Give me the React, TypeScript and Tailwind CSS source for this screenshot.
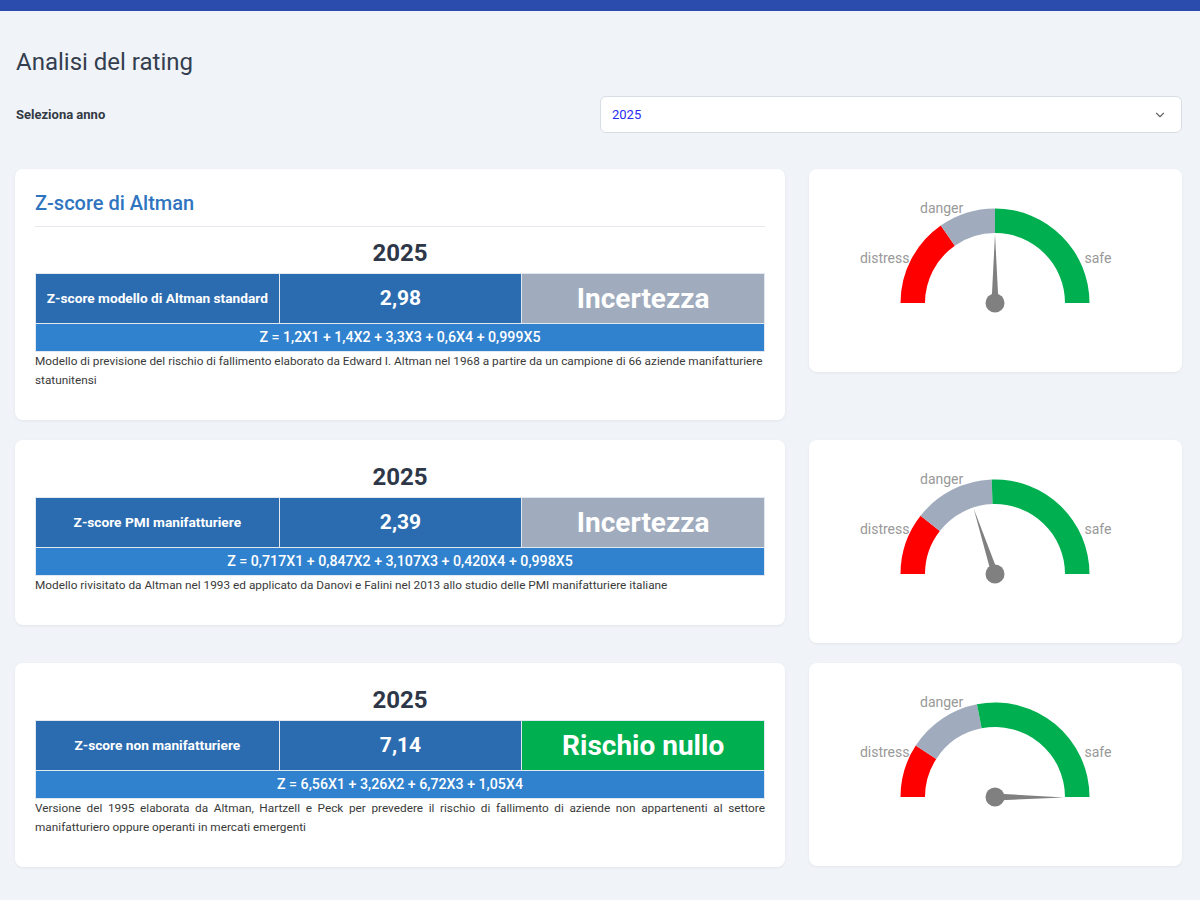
import React from "react";
import { ChevronDown } from "lucide-react";

type Model = {
  year: string;
  label: string;
  value: string;
  status: string;
  statusClass: string;
  formula: string;
  desc: string;
  justify?: boolean;
  title?: string;
};

const models: Model[] = [
  {
    title: "Z-score di Altman",
    year: "2025",
    label: "Z-score modello di Altman standard",
    value: "2,98",
    status: "Incertezza",
    statusClass: "bg-[#a0acbd]",
    formula: "Z = 1,2X1 + 1,4X2 + 3,3X3 + 0,6X4 + 0,999X5",
    desc: "Modello di previsione del rischio di fallimento elaborato da Edward I. Altman nel 1968 a partire da un campione di 66 aziende manifatturiere statunitensi",
  },
  {
    year: "2025",
    label: "Z-score PMI manifatturiere",
    value: "2,39",
    status: "Incertezza",
    statusClass: "bg-[#a0acbd]",
    formula: "Z = 0,717X1 + 0,847X2 + 3,107X3 + 0,420X4 + 0,998X5",
    desc: "Modello rivisitato da Altman nel 1993 ed applicato da Danovi e Falini nel 2013 allo studio delle PMI manifatturiere italiane",
  },
  {
    year: "2025",
    label: "Z-score non manifatturiere",
    value: "7,14",
    status: "Rischio nullo",
    statusClass: "bg-[#00b050]",
    formula: "Z = 6,56X1 + 3,26X2 + 6,72X3 + 1,05X4",
    desc: "Versione del 1995 elaborata da Altman, Hartzell e Peck per prevedere il rischio di fallimento di aziende non appartenenti al settore manifatturiero oppure operanti in mercati emergenti",
    justify: true,
  },
];

const gauges = [
  { red: 125, gray: 90, needle: 90 },
  { red: 142, gray: 92, needle: 108 },
  { red: 147, gray: 101, needle: -0.5 },
];

const CX = 186;
const CY = 134;
const RO = 94.5;
const RI = 70;

function pt(r: number, deg: number) {
  const a = (deg * Math.PI) / 180;
  return [CX + r * Math.cos(a), CY - r * Math.sin(a)];
}

function arc(from: number, to: number) {
  const [x1, y1] = pt(RO, from);
  const [x2, y2] = pt(RO, to);
  const [x3, y3] = pt(RI, to);
  const [x4, y4] = pt(RI, from);
  const large = from - to > 180 ? 1 : 0;
  return `M${x1} ${y1} A${RO} ${RO} 0 ${large} 1 ${x2} ${y2} L${x3} ${y3} A${RI} ${RI} 0 ${large} 0 ${x4} ${y4} Z`;
}

function Gauge({ red, gray, needle }: { red: number; gray: number; needle: number }) {
  const [tx, ty] = pt(69, needle);
  const [bx1, by1] = pt(3.5, needle + 90);
  const [bx2, by2] = pt(3.5, needle - 90);
  return (
    <svg width="373" height="203" viewBox="0 0 373 203" className="block">
      <path d={arc(180, red)} fill="#ff0000" />
      <path d={arc(red, gray)} fill="#a0acbd" />
      <path d={arc(gray, 0)} fill="#00b050" />
      <polygon points={`${bx1},${by1} ${tx},${ty} ${bx2},${by2}`} fill="#808080" />
      <circle cx={CX} cy={CY} r="9.5" fill="#808080" />
      <text x="100.5" y="94" textAnchor="end" fontSize="14" fill="#999999" fontFamily="Roboto, sans-serif">
        distress
      </text>
      <text x="111" y="44" fontSize="14" fill="#999999" fontFamily="Roboto, sans-serif">
        danger
      </text>
      <text x="275.5" y="94" fontSize="14" fill="#999999" fontFamily="Roboto, sans-serif">
        safe
      </text>
    </svg>
  );
}

function ModelCard({ m }: { m: Model }) {
  return (
    <div className={`bg-white rounded-lg shadow-[0_1px_3px_rgba(0,0,0,0.06)] px-5 pb-[30px] ${m.title ? "pt-[20px]" : "pt-[23px]"}`}>
      {m.title && (
        <>
          <h2 className="text-[20px] leading-7 font-medium text-[#2f74bf]">{m.title}</h2>
          <div className="mt-[9px] h-px bg-[#e5e9ef]" />
          <div className="h-[12px]" />
        </>
      )}
      <div className="text-center text-[24px] leading-7 font-bold text-[#2d3748]">{m.year}</div>
      <div className="mt-[6px] border border-[#e2e8f0]">
        <div className="grid grid-cols-3 h-[49px]">
          <div className="bg-[#2b6cb0] flex items-center justify-center text-white text-[13.7px] font-bold">
            {m.label}
          </div>
          <div className="bg-[#2b6cb0] border-l border-[#e2e8f0] flex items-center justify-center text-white text-[21px] font-bold">
            {m.value}
          </div>
          <div className={`${m.statusClass} border-l border-[#e2e8f0] flex items-center justify-center text-white text-[28px] font-bold`}>
            {m.status}
          </div>
        </div>
        <div className="bg-[#3182ce] border-t border-[#e2e8f0] h-[28px] flex items-center justify-center text-white text-[14.2px] font-medium">
          {m.formula}
        </div>
      </div>
      <p className={`text-[11.8px] leading-[19px] text-[#3a3a3a] ${m.justify ? "text-justify" : ""}`}>{m.desc}</p>
    </div>
  );
}

export default function App() {
  return (
    <div className="min-h-[900px] bg-[#f0f4f8]" style={{ fontFamily: "Roboto, 'Noto Sans', sans-serif" }}>
      <div className="h-[11px] bg-[#2b4cad]" />
      <div className="px-[15px] pb-8">
        <h1 className="pt-[36px] text-[24px] leading-[30px] text-[#343e4f] pl-px">Analisi del rating</h1>
        <div className="mt-[19px] flex items-center w-[1167px]">
          <div className="w-[585px] pl-px text-[13px] font-bold text-[#333a44]">Seleziona anno</div>
          <div className="flex-1 h-[37px] bg-white border border-[#d8dde5] rounded-md flex items-center justify-between pl-[11px] pr-[14px]">
            <span className="text-[13px] text-[#2b2bf0]">2025</span>
            <ChevronDown size={14} strokeWidth={2} className="text-[#666]" />
          </div>
        </div>
        <div className="mt-[36px] grid grid-cols-[770px_373px] gap-x-6 gap-y-5 items-start">
          {models.map((m, i) => (
            <React.Fragment key={i}>
              <ModelCard m={m} />
              <div className="bg-white rounded-lg shadow-[0_1px_3px_rgba(0,0,0,0.06)] h-[203px]">
                <Gauge {...gauges[i]} />
              </div>
            </React.Fragment>
          ))}
        </div>
      </div>
    </div>
  );
}
